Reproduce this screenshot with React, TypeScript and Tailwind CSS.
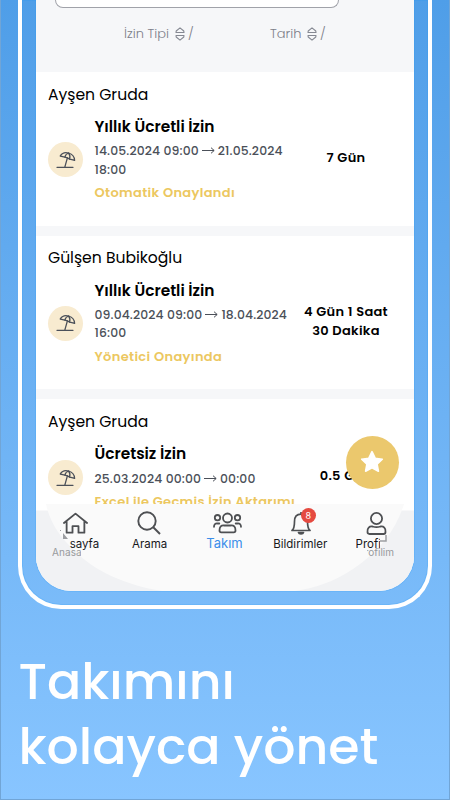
import type { ReactNode } from 'react';

const requests = [
  {
    name: 'Ayşen Gruda',
    type: 'Yıllık Ücretli İzin',
    range: ['14.05.2024 09:00', '21.05.2024'],
    end: '18:00',
    status: 'Otomatik Onaylandı',
    duration: ['7 Gün'],
  },
  {
    name: 'Gülşen Bubikoğlu',
    type: 'Yıllık Ücretli İzin',
    range: ['09.04.2024 09:00', '18.04.2024'],
    end: '16:00',
    status: 'Yönetici Onayında',
    duration: ['4 Gün 1 Saat', '30 Dakika'],
  },
  {
    name: 'Ayşen Gruda',
    type: 'Ücretsiz İzin',
    range: ['25.03.2024 00:00', '00:00'],
    end: '',
    status: 'Excel ile Geçmiş İzin Aktarımı',
    duration: ['0.5 Gün'],
  },
];

function Umbrella() {
  return (
    <svg width="20" height="18" viewBox="0 0 20 18" fill="none" stroke="#4b5059" strokeWidth="1.3" strokeLinecap="round" strokeLinejoin="round">
      <path d="M1 16.3h16M8.8 16.2l2.6-9.4" />
      <path d="M4.2 5C6 2.1 9.3 1 12.6 2c3.5 1 5.9 3.9 6 7.4l-2.7-.7-2.3-.6-2.3-1.3-2.4-.6-2.3-.6Z" />
      <path d="M12.6 2C10.7 2.6 9.3 4.2 8.9 6.2M12.6 2c1.3 1.7 1.6 4 1 6.1" />
    </svg>
  );
}

function Arrow() {
  return (
    <svg className="mx-[3px] shrink-0" width="13" height="8" viewBox="0 0 13 8" fill="none" stroke="#4b5059">
      <path d="M0 3.5h12M9 .7l3.2 2.8L9 6.3" />
    </svg>
  );
}

function SortIcon() {
  return (
    <svg width="10" height="14" viewBox="0 0 10 14" fill="none" stroke="#858892" strokeWidth="1.1" strokeLinejoin="round">
      <path d="M1 5.5 1.2 4 5 .9 8.8 4 9 5.5ZM1 8.5l.2 1.5L5 13.1 8.8 10 9 8.5Z" />
    </svg>
  );
}

function Tab({ icon, label, className }: { icon: ReactNode; label: ReactNode; className?: string }) {
  return (
    <div className={`flex w-[76px] flex-col items-center ${className ?? ''}`}>
      <div className="flex h-6 items-center justify-center">{icon}</div>
      <span className="mt-[3px] text-[11.5px] leading-[12px] whitespace-nowrap">{label}</span>
    </div>
  );
}

function TabBar() {
  return (
    <div className="absolute inset-x-0 bottom-0 h-[88px] font-[Inter,sans-serif] text-[#17181b]">
      <svg className="absolute inset-0" width="378" height="88" viewBox="0 0 378 88">
        <path d="M0 7.5h378V88H0Z" fill="#f1f2f4" />
        <path d="M10 1h358c-8 26-25 48-51 65-19 13-39 19-58 22H126C90 82 60 69 40 49 24 34 14 20 10 1Z" fill="#fafafa" />
      </svg>
      {/* second row of labels that shows through at the rounded corners */}
      <span className="absolute top-[44px] left-[16px] w-[29px] overflow-hidden text-[10px] leading-[10px] tracking-[0.1px] text-[#989a9d]">Anasayfa</span>
      <span className="absolute top-[44px] left-[331px] flex w-[27px] justify-end overflow-hidden text-[10px] leading-[10px] text-[#989a9d]">Profilim</span>
      <svg className="absolute top-[26px] left-[24px]" width="9" height="12" viewBox="0 0 9 12" fill="#9c9ea1">
        <path d="M0 1h1v1H0ZM3 4l5 6H3Z" />
      </svg>
      <svg className="absolute top-[31px] left-[343px]" width="9" height="9" viewBox="0 0 9 9" fill="none" stroke="#9c9ea1" strokeWidth="1.5">
        <path d="M7 1v6H1" />
      </svg>
      <div className="relative flex pt-[8px]">
        <Tab
          className="ml-[1px]"
          icon={
            <svg className="ml-[2px]" width="27" height="22" viewBox="0 0 28 22" fill="none" stroke="#4e5053" strokeWidth="1.9" strokeLinecap="round" strokeLinejoin="round">
              <path d="M2 11 14 1.3 26 11M4.8 9v12h6.1v-6.7h6.2V21h6.1V9" />
            </svg>
          }
          label={<span className="ml-[19px] inline-block">sayfa</span>}
        />
        <Tab
          className="-ml-[1px]"
          icon={
            <svg className="mr-[1px]" width="24" height="24" viewBox="0 0 24 24" fill="none" stroke="#4e5053" strokeWidth="1.9">
              <circle cx="10" cy="10" r="8.7" />
              <path d="m16 16 7 7" />
            </svg>
          }
          label="Arama"
        />
        <Tab
          className="-ml-[1px] text-[#3b8eea]"
          icon={
            <svg className="ml-[7px]" width="29" height="22" viewBox="0 0 29 22" fill="none" stroke="#4e5053" strokeWidth="1.8" strokeLinecap="round">
              <circle cx="14.5" cy="6" r="4.5" />
              <circle cx="4.5" cy="5.7" r="2.7" />
              <circle cx="24.5" cy="5.7" r="2.7" />
              <path d="M6.5 18.5c0-3.8 1.8-5.3 4.5-5h7c2.7-.3 4.5 1.2 4.5 5 0 1.3-.5 1.9-1.8 1.9H8.3c-1.3 0-1.8-.6-1.8-1.9ZM1 14.8c0-2.5 1.3-3.5 3.5-3.3h1.8M28 14.8c0-2.5-1.3-3.5-3.5-3.3h-1.8" />
            </svg>
          }
          label={<span className="relative -top-px text-[13px]">Takım</span>}
        />
        <Tab
          icon={
            <div className="relative ml-[1px]">
              <svg width="20" height="23" viewBox="0 0 20 23" fill="none" stroke="#4e5053" strokeWidth="1.7" strokeLinejoin="round">
                <path d="M1 18.5c2.5-2 2.5-5 2.5-9C3.5 5 6 2.2 10 2.2s6.5 2.8 6.5 7.3c0 4 0 7 2.5 9ZM10 0v2" />
                <path d="M7.5 20.5h5c-.5 2-4.5 2-5 0Z" fill="#4e5053" />
              </svg>
              <span className="absolute -top-[4px] left-[10px] h-[15px] w-[15px] rounded-full bg-[#e54a40] text-center text-[9px] leading-[15px] text-white">8</span>
            </div>
          }
          label="Bildirimler"
        />
        <Tab
          icon={
            <svg width="21" height="23" viewBox="0 0 20 23" fill="none" stroke="#4e5053" strokeWidth="1.8">
              <circle cx="10" cy="6.5" r="5.6" />
              <path d="M1 20c-.5-4 2-6 5-5.5 3 1 5 1 8 0 3-.5 5.5 1.5 5 5.5 0 1.3-.5 2-2 2H3c-1.5 0-2-.7-2-2Z" />
            </svg>
          }
          label={<span className="-ml-[17px] block w-[24px] overflow-hidden">Profilim</span>}
        />
      </div>
    </div>
  );
}

export default function App() {
  return (
    <div className="relative h-[800px] w-[450px] overflow-hidden border-x border-b border-[#71a5d6] bg-linear-to-b from-[#4f9ee8] via-[#77b9f8] via-70% to-[#88c5ff] font-[Poppins,Inter,sans-serif]">
      <div className="mx-[17px] h-[609px] rounded-b-[43px] border-x-4 border-b-4 border-white px-[14px] pb-[14px] shadow-[inset_0_0_0_1px_rgba(20,145,240,0.15)]">
        <div className="relative h-[591px] overflow-hidden rounded-b-[35px] bg-white shadow-[0_0_0_1px_rgba(20,145,240,0.15)]">
          <header className="h-[72px] bg-[#f6f7f9]">
            <div className="ml-[19px] h-[8px] w-[284px] rounded-b-[9px] border border-t-0 border-[#a0a2a9] bg-white" />
            <div className="flex h-[52px] items-center text-[13px] font-light text-[#7d808a]">
              <div className="ml-[88px] flex w-[146px] items-center">
                <span className="w-[51px]">İzin Tipi</span>
                <SortIcon />
                <span className="ml-[3px]">/</span>
              </div>
              <div className="flex items-center">
                <span className="w-[37px]">Tarih</span>
                <SortIcon />
                <span className="ml-[3px]">/</span>
              </div>
            </div>
          </header>
          {requests.map((item, i) => (
            <section key={i} className="h-[163.7px] border-b-[10px] border-[#f6f7f9] px-3 pt-[12.5px]">
              <h2 className="text-[15.6px] leading-[20px] text-black">{item.name}</h2>
              <div className="mt-[13.5px] flex">
                <div className={`flex h-[35px] w-[35px] shrink-0 items-center justify-center rounded-full bg-[#f8ebd0] ${item.end ? 'mt-[24px]' : 'mt-[15px]'}`}>
                  <Umbrella />
                </div>
                <div className="ml-[11.5px] w-[201.5px] whitespace-nowrap">
                  <h3 className="text-[15.4px] leading-[18px] font-semibold text-black">{item.type}</h3>
                  <div className="mt-[6.2px] flex items-center text-[12.4px] leading-[18.5px] font-medium tracking-[0.12px] text-[#4b5059]">
                    {item.range[0]}
                    <Arrow />
                    {item.range[1]}
                  </div>
                  {item.end && <div className="text-[12.4px] leading-[18.5px] font-medium tracking-[0.12px] text-[#4b5059]">{item.end}</div>}
                  <div className="mt-[4.8px] text-[13px] leading-[18px] font-semibold tracking-[0.34px] text-[#ecc760]">{item.status}</div>
                </div>
                <div className={`flex h-[38px] w-[100px] flex-col items-center justify-center text-[13px] leading-[19px] font-semibold tracking-[0.3px] whitespace-nowrap text-black ${item.end ? 'mt-[20px]' : 'mt-[11px]'}`}>
                  {item.duration.map((line) => (
                    <span key={line}>{line}</span>
                  ))}
                </div>
              </div>
            </section>
          ))}
          <button className="absolute top-[436px] left-[310px] flex h-[52.5px] w-[52.5px] items-center justify-center rounded-full bg-[#ebc86d]">
            <svg width="26" height="26" viewBox="0 0 24 24" fill="white" stroke="white" strokeWidth="1.5" strokeLinejoin="round">
              <path d="m12 2.5 2.9 6 6.6.9-4.8 4.6 1.2 6.5-5.9-3.1-5.9 3.1 1.2-6.5-4.8-4.6 6.6-.9Z" />
            </svg>
          </button>
          <TabBar />
        </div>
      </div>
      <h1 className="mt-[40px] ml-[17.5px] text-[50.6px] leading-[65px] font-medium whitespace-nowrap text-white">
        Takımını
        <br />
        kolayca yönet
      </h1>
    </div>
  );
}
